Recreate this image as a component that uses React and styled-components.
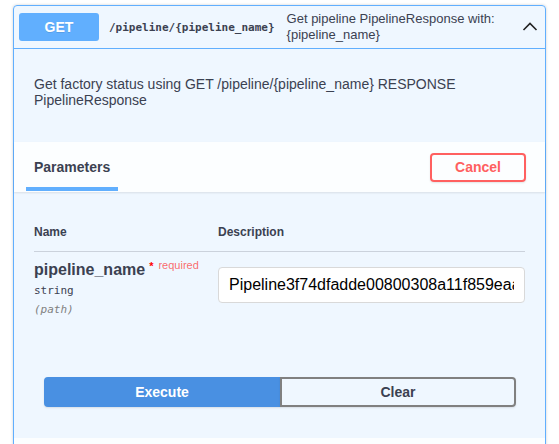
import styled, { createGlobalStyle } from "styled-components";

const GlobalStyle = createGlobalStyle`
    body {
        margin: 0;
        background: #fff;
        font-family: "Liberation Sans", Arial, sans-serif;
        color: #3b4151;
    }
`;

const Page = styled.div`
    padding: 5px 13px 0;
    height: 444px;
    overflow: hidden;
    box-sizing: border-box;
`;

const OpBlock = styled.div`
    border: 1px solid #61affe;
    border-radius: 4px;
    background: rgba(97, 175, 254, 0.1);
    box-shadow: 0 0 3px rgba(0, 0, 0, 0.19);
`;

// Summary row
const Summary = styled.div`
    display: flex;
    align-items: center;
    padding: 5px;
    border-bottom: 1px solid #61affe;
`;

const Method = styled.span`
    min-width: 80px;
    padding: 6px 0;
    border-radius: 3px;
    background: #61affe;
    color: #fff;
    font-size: 14px;
    font-weight: 700;
    line-height: 16px;
    text-align: center;
    text-shadow: 0 1px 0 rgba(0, 0, 0, 0.1);
`;

const Path = styled.span`
    padding: 0 12px 0 10px;
    font-family: "DejaVu Sans Mono", monospace;
    font-size: 11px;
    font-weight: 700;
    color: #3b4151;
    white-space: nowrap;
`;

const SummaryText = styled.div`
    flex: 1;
    font-size: 13px;
    line-height: 16px;
    color: #3b4151;
`;

const Arrow = styled.svg`
    width: 16px;
    height: 16px;
    margin: 0 2px 0 8px;
`;

const Description = styled.div`
    padding: 27px 20px 34px;
    font-size: 14px;
    line-height: 16px;
    color: #3b4151;
`;

// Parameters header band
const SectionHeader = styled.div`
    display: flex;
    align-items: center;
    justify-content: space-between;
    min-height: 50px;
    padding: 0 19px 0 20px;
    background: rgba(255, 255, 255, 0.8);
    box-shadow: 0 1px 2px rgba(0, 0, 0, 0.1);
`;

const Tab = styled.h4`
    position: relative;
    margin: 0;
    font-size: 14px;
    font-weight: 700;
    color: #3b4151;

    &::after {
        content: "";
        position: absolute;
        left: -8px;
        right: -8px;
        bottom: -16px;
        height: 4px;
        background: #61affe;
    }
`;

const Button = styled.button`
    box-sizing: border-box;
    height: ${p => p.$h || 29}px;
    padding: 0 23px;
    border: 2px solid ${p => p.$border};
    border-radius: ${p => p.$radius || "4px"};
    background: ${p => p.$bg || "transparent"};
    color: ${p => p.$color};
    font-family: "Liberation Sans", Arial, sans-serif;
    font-size: 14px;
    font-weight: 700;
    box-shadow: 0 1px 2px rgba(0, 0, 0, 0.1);
    cursor: pointer;
`;

const TableWrap = styled.div`
    padding: 21px 20px 19px;
`;

const Row = styled.div`
    display: grid;
    grid-template-columns: 184px 1fr;
    border-bottom: ${p => (p.$head ? "1px solid rgba(59, 65, 81, 0.2)" : "none")};
    padding: ${p => (p.$head ? "12px 0" : "10px 0")};
`;

const Th = styled.div`
    font-size: 12px;
    font-weight: 700;
    line-height: 14px;
    color: #3b4151;
`;

const ParamName = styled.div`
    font-size: 16px;
    font-weight: 700;
    line-height: 16px;
    color: #3b4151;
`;

const Star = styled.span`
    position: relative;
    top: -5px;
    margin-left: 4px;
    font-size: 11px;
    color: red;
`;

const Required = styled.span`
    position: relative;
    top: -6px;
    padding-left: 5px;
    font-size: 11px;
    font-weight: 400;
    color: rgba(255, 0, 0, 0.6);
`;

const ParamType = styled.div`
    margin-top: 5px;
    font-family: "DejaVu Sans Mono", monospace;
    font-size: 11px;
    font-weight: 400;
    line-height: 14px;
    color: #3b4151;
`;

const ParamIn = styled.div`
    margin-top: 5px;
    font-family: "DejaVu Sans Mono", monospace;
    font-size: 11px;
    font-style: italic;
    line-height: 14px;
    color: gray;
`;

const Input = styled.input`
    box-sizing: border-box;
    width: 100%;
    height: 36px;
    margin: 5px 0 0;
    padding: 8px 10px;
    border: 1px solid #d9d9d9;
    border-radius: 4px;
    background: #fff;
    font-family: "Liberation Sans", Arial, sans-serif;
    font-size: 16px;
    color: #000;
    outline: none;
`;

const BtnGroup = styled.div`
    display: flex;
    padding: 31px 29px 31px 30px;
`;

const Responses = styled.div`
    height: 40px;
    background: rgba(255, 255, 255, 0.8);
`;

export default function App() {
    return (
        <Page>
            <GlobalStyle />
            <OpBlock>
                <Summary>
                    <Method>GET</Method>
                    <Path>/pipeline/{"{pipeline_name}"}</Path>
                    <SummaryText>
                        Get pipeline PipelineResponse with: {"{pipeline_name}"}
                    </SummaryText>
                    <Arrow viewBox="0 0 16 16">
                        <polyline points="1.5,11 8,4.5 14.5,11" fill="none" stroke="#222" strokeWidth="1.6" />
                    </Arrow>
                </Summary>

                <Description>
                    Get factory status using GET /pipeline/{"{pipeline_name}"} RESPONSE PipelineResponse
                </Description>

                <SectionHeader>
                    <Tab>Parameters</Tab>
                    <Button $border="#ff6060" $color="#ff6060">Cancel</Button>
                </SectionHeader>

                <TableWrap>
                    <Row $head>
                        <Th>Name</Th>
                        <Th>Description</Th>
                    </Row>
                    <Row>
                        <div>
                            <ParamName>
                                pipeline_name
                                <Star>*</Star>
                                <Required>required</Required>
                            </ParamName>
                            <ParamType>string</ParamType>
                            <ParamIn>(path)</ParamIn>
                        </div>
                        <div>
                            <Input readOnly value="Pipeline3f74dfadde00800308a11f859eaa21c7" />
                        </div>
                    </Row>
                </TableWrap>

                <BtnGroup>
                    <Button $h={30} $bg="#4990e2" $border="#4990e2" $color="#fff" $radius="4px 0 0 4px" style={{ flex: 1 }}>
                        Execute
                    </Button>
                    <Button $h={30} $border="gray" $color="#3b4151" $radius="0 4px 4px 0" style={{ flex: 1 }}>
                        Clear
                    </Button>
                </BtnGroup>

                <Responses />
            </OpBlock>
        </Page>
    );
}
